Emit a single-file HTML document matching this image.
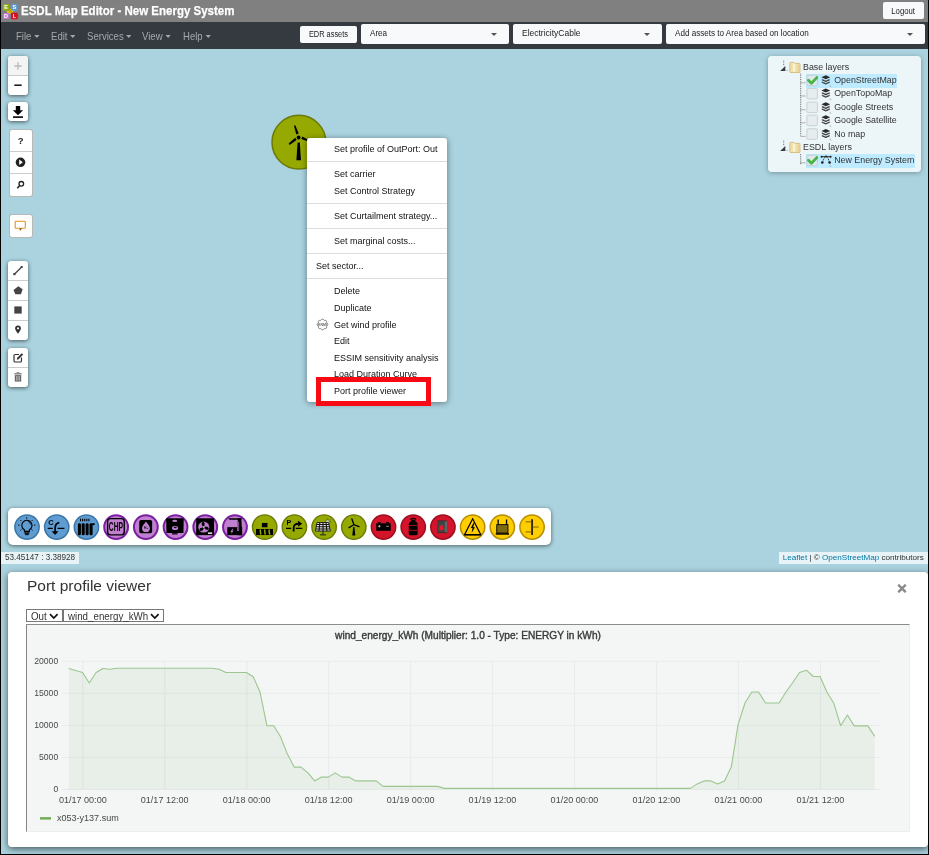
<!DOCTYPE html>
<html lang="en">
<head>
<meta charset="utf-8">
<title>ESDL Map Editor - New Energy System</title>
<style>
*{box-sizing:border-box;margin:0;padding:0}
html,body{width:929px;height:855px;overflow:hidden;background:#aad3df;font-family:"Liberation Sans",sans-serif}
#root{will-change:transform;position:absolute;left:0;top:0;width:929px;height:855px;overflow:hidden;background:#aad3df}
.abs{position:absolute}
#hdr{left:0;top:0;width:929px;height:22px;background:#808080}
#title{left:20.700px;top:3.300px;color:#fff;font-weight:bold;font-size:13.600px;line-height:16px;white-space:nowrap;transform:scaleX(.847);transform-origin:0 50%;-webkit-text-stroke:.25px #fff}
#logout{left:883px;top:2px;width:41px;height:17px;background:#f8f9fa;border-radius:2px;font-size:8.6px;line-height:18.200px;text-align:center;color:#222}#logout span,.edr span{display:inline-block;transform:scaleX(.9)}
#nav{left:0;top:22px;width:929px;height:26.600px;background:#343a40}
.mi{top:30px;color:#a5a8ab;font-size:11px;line-height:13px;white-space:nowrap;transform:scaleX(.87);transform-origin:0 50%}
.mi i{display:inline-block;width:0;height:0;border-left:3px solid transparent;border-right:3px solid transparent;border-top:3px solid #a5a8ab;margin-left:3px;vertical-align:2px}
.btn{background:#f8f9fa;border-radius:2px;color:#222;font-size:8.5px;white-space:nowrap}
.sel i{position:absolute;right:12.5px;top:9px;width:0;height:0;border-left:3.5px solid transparent;border-right:3.5px solid transparent;border-top:3.5px solid #555}
.sel span{position:absolute;left:9px;top:3px;line-height:12px;font-size:8.8px;transform:scaleX(.92);transform-origin:0 50%}
#bl{left:0;top:0;width:1px;height:855px;background:#000}
#br{left:928px;top:0;width:1px;height:855px;background:#000}
#bb{left:0;top:854px;width:929px;height:1px;background:#000}

.bar{background:#fff;border-radius:3px;box-shadow:0 1px 4px rgba(0,0,0,.6)}
.bar .b{position:absolute;left:0;width:100%;border-top:1px solid #ccc}
.bar2{background:#fff;border-radius:3px;border:1px solid rgba(0,0,0,.28)}
.ic{position:absolute}
#ctx{left:307px;top:138px;width:140px;height:264px;background:#fff;border-radius:3px;box-shadow:0 1px 6px rgba(0,0,0,.45)}
#ctx div.t{position:absolute;left:27px;font-size:9px;line-height:12px;color:#111;white-space:nowrap}
#ctx div.s{position:absolute;left:0;width:140px;height:1px;background:#ddd}
#red{left:316px;top:377.3px;width:115.2px;height:28.5px;border:5px solid #f80a14}
#assets{left:8px;top:508px;width:543px;height:36.600px;background:#fff;border-radius:5px;box-shadow:0 1px 4px rgba(0,0,0,.55)}
#coord{left:1px;top:551.700px;width:78px;height:12.600px;background:rgba(255,255,255,.72);font-size:8.140px;line-height:12.600px;color:#333;padding-left:4px;white-space:nowrap}
#attr{left:778.600px;top:551.800px;width:150px;height:12.500px;background:rgba(255,255,255,.72);font-size:8.120px;line-height:12.500px;color:#333;padding-left:4.200px;white-space:nowrap}
#attr b{font-weight:normal;color:#0078a8}
#layers{left:768px;top:56px;width:153px;height:116px;background:rgba(255,255,255,.78);border-radius:4px;box-shadow:0 1px 5px rgba(0,0,0,.3)}
#layers .r{position:absolute;font-size:8.85px;line-height:13px;color:#333;white-space:nowrap}
#layers .hl{position:absolute;background:#beebff;height:13.8px}

#dlg{left:8px;top:572px;width:920px;height:275px;background:#fff;border-radius:4px;box-shadow:0 2px 7px rgba(0,0,0,.6)}
#dtitle{left:27px;top:576px;font-size:15.5px;line-height:20px;color:#333;white-space:nowrap}
#dclose{left:894px;top:580.700px;width:16px;font-size:17px;line-height:16px;font-weight:bold;color:#8a8a8a;text-align:center;-webkit-text-stroke:.5px #8a8a8a}
.dsel{height:13px;border:1px solid #777;background:#fff;font-size:10.6px;color:#333;white-space:nowrap}
.dsel span{position:absolute;left:3.5px;top:.8px;line-height:11px;transform:scaleX(.92);transform-origin:0 50%}
#chart{left:26px;top:624px;width:884px;height:208px;background:#f4f6f6;border-left:1px solid #858585;border-top:1px solid #8c8c8c;border-right:1px solid #eee;border-bottom:1px solid #eee}
</style>
</head>
<body>
<div id="root">
<!-- header -->
<div id="hdr" class="abs"></div>
<svg class="abs" style="left:2px;top:3px" width="18" height="18" viewBox="2 3 18 18" font-family="Liberation Sans,sans-serif" font-weight="bold" font-size="5.500" text-anchor="middle"><path d="M7.600 13.200L13.200 9.400" stroke="#f2c200" stroke-width="3.800"/><path d="M9.700 9.300l2 3M8.600 10.200l1.800 2.800" stroke="#8a6d00" stroke-width=".6"/><rect x="2.900" y="4.100" width="6.400" height="6.700" rx="1.300" fill="#8db117"/><rect x="11" y="4.100" width="6.700" height="6.700" rx="1.300" fill="#5b9bd5"/><rect x="2.900" y="12.900" width="6.400" height="6.200" rx="1.300" fill="#c076d0"/><rect x="11" y="12.700" width="6.900" height="6.500" rx="1.300" fill="#d9101f"/><text x="6.100" y="9.400" fill="#fff">E</text><text x="14.400" y="9.400" fill="#fff">S</text><text x="6.100" y="18" fill="#fff">D</text><text x="14.500" y="18" fill="#fff">L</text></svg>
<div id="title" class="abs">ESDL Map Editor - New Energy System</div>
<div id="logout" class="abs"><span>Logout</span></div>
<div id="nav" class="abs"></div>
<div class="abs mi" style="left:16px">File<i></i></div>
<div class="abs mi" style="left:51px">Edit<i></i></div>
<div class="abs mi" style="left:87px">Services<i></i></div>
<div class="abs mi" style="left:142px">View<i></i></div>
<div class="abs mi" style="left:183px">Help<i></i></div>
<div class="abs btn edr" style="left:300px;top:26px;width:57px;height:17px;line-height:17px;text-align:center"><span style="transform:scaleX(.87)">EDR assets</span></div>
<div class="abs btn sel" style="left:361px;top:24px;width:148px;height:20px"><span>Area</span><i></i></div>
<div class="abs btn sel" style="left:513px;top:24px;width:149px;height:20px"><span style="transform:scaleX(.965)">ElectricityCable</span><i></i></div>
<div class="abs btn sel" style="left:666px;top:24px;width:259px;height:20px"><span>Add assets to Area based on location</span><i></i></div>

<!-- map controls -->
<div class="abs bar" style="left:8.400px;top:56px;width:19.700px;height:39px"><div style="position:absolute;left:0;top:0;width:20px;height:19px;background:#f4f4f4;border-radius:3px 3px 0 0"></div><div class="b" style="top:19px"></div>
<svg class="ic" style="left:0;top:0" width="20" height="39"><path d="M6.3 10h7.4M10 6.3v7.4" stroke="#bbb" stroke-width="1.3" fill="none"/><path d="M6.3 29.2h7.4" stroke="#111" stroke-width="1.5"/></svg></div>
<div class="abs bar" style="left:8.400px;top:102px;width:19.700px;height:19px"><svg class="ic" style="left:0;top:0" width="20" height="19"><path d="M7.8 4h4.4v4.2h2.9L10 13.2 4.9 8.200h2.9z" fill="#000"/><path d="M5 15.1h10" stroke="#000" stroke-width="1.6"/></svg></div>
<div class="abs bar2" style="left:8.600px;top:129px;width:24px;height:68.400px"><div style="position:absolute;left:0;top:20.700px;width:22px;height:1px;background:#ccc"></div><div style="position:absolute;left:0;top:43.200px;width:22px;height:1px;background:#ccc"></div>
<div style="position:absolute;left:0;top:5px;width:22px;text-align:center;font-size:9.5px;font-weight:bold;line-height:12px;color:#222">?</div>
<svg class="ic" style="left:.5px;top:21.400px" width="21" height="46"><circle cx="10.5" cy="11.3" r="4.800" fill="#222"/><path d="M9.2 8.6l3.6 2.700-3.600 2.700z" fill="#fff"/><circle cx="11.3" cy="32.800" r="2.300" fill="none" stroke="#222" stroke-width="1.3"/><path d="M9.7 34.600L7.300 37.200" stroke="#222" stroke-width="1.5"/></svg></div>
<div class="abs bar2" style="left:8.600px;top:214px;width:24px;height:24px"><svg class="ic" style="left:.4px;top:0" width="21" height="22"><path d="M6 6.300h8.500a.8.800 0 0 1 .8.800v5.400a.8.800 0 0 1-.8.800H11.700l-1.500 1.700-.3-1.700H6a.8.800 0 0 1-.8-.8V7.100a.8.800 0 0 1 .8-.8z" fill="#fff" stroke="#e8921a" stroke-width="1.100"/><path d="M9.600 13.500l.5 1.600 1.500-1.600z" fill="#333"/></svg></div>
<div class="abs bar" style="left:8.400px;top:261px;width:19.700px;height:79px"><div class="b" style="top:19px"></div><div class="b" style="top:39px"></div><div class="b" style="top:59px"></div>
<svg class="ic" style="left:0;top:0" width="20" height="79"><path d="M6.300 13.200L13.700 6" stroke="#444" stroke-width="1.300"/><rect x="5.300" y="12" width="2.200" height="2.200" fill="#444"/><rect x="12.700" y="5" width="2" height="2" fill="#444"/><path d="M10.300 25.200l4.300 3.100-1.600 5H7.400l-1.900-4.400z" fill="#444"/><rect x="6.300" y="45.400" width="7.400" height="7.200" fill="#444"/><path d="M10 64.400a2.900 2.900 0 0 1 2.900 2.900c0 2-2.900 5.500-2.900 5.500s-2.900-3.500-2.900-5.500A2.900 2.900 0 0 1 10 64.400z" fill="#333"/><circle cx="10" cy="67.300" r="1.100" fill="#fff"/></svg></div>
<div class="abs bar" style="left:8.400px;top:348px;width:19.700px;height:39px"><div class="b" style="top:19px"></div>
<svg class="ic" style="left:0;top:0" width="20" height="39"><path d="M11 6.500H7.300a1.300 1.300 0 0 0-1.300 1.300v4.900a1.300 1.300 0 0 0 1.300 1.300h4.900a1.300 1.300 0 0 0 1.300-1.300V9.500" fill="none" stroke="#333" stroke-width="1.200"/><path d="M8.800 11.700l.4-1.900 4.600-4.600 1.400 1.400-4.600 4.600z" fill="#333"/><g fill="#666"><rect x="6.300" y="25.300" width="7.400" height="1.100"/><rect x="8.700" y="24.300" width="2.600" height="1"/><path d="M6.800 27.100h6.400v6.500H6.800z"/></g><path d="M8.600 28v4.700M10 28v4.700M11.400 28v4.700" stroke="#ddd" stroke-width=".6"/></svg></div>
<svg class="abs" style="left:268px;top:111px" width="62" height="62" viewBox="268 111 62 62"><circle cx="298.900" cy="142.200" r="26.900" fill="#95a901" stroke="#6b7a04" stroke-width="1.500"/><circle cx="298.600" cy="137.500" r="1.900" fill="#000"/><path d="M297.600 142.600h2.200l1.200 17.600h-4.600z" fill="#000"/><path d="M296.300 134.400l2.400-.9-3.400-8.200-1.300.5z" fill="#000"/><path d="M295.200 137.800l1.400 2.200-7 4.900-.9-1.300z" fill="#000"/><path d="M302.300 136.600l-.9 2.400 8 3.100.5-1.400z" fill="#000"/></svg>
<div id="ctx" class="abs">
<div class="t" style="left:27px;top:5.1px">Set profile of OutPort: Out</div>
<div class="t" style="left:27px;top:30.3px">Set carrier</div>
<div class="t" style="left:27px;top:46.9px">Set Control Strategy</div>
<div class="t" style="left:27px;top:71.8px">Set Curtailment strategy...</div>
<div class="t" style="left:27px;top:97.0px">Set marginal costs...</div>
<div class="t" style="left:9px;top:122.2px">Set sector...</div>
<div class="t" style="left:27px;top:147.2px">Delete</div>
<div class="t" style="left:27px;top:163.8px">Duplicate</div>
<div class="t" style="left:27px;top:180.6px">Get wind profile</div>
<div class="t" style="left:27px;top:197.4px">Edit</div>
<div class="t" style="left:27px;top:214.0px">ESSIM sensitivity analysis</div>
<div class="t" style="left:27px;top:230.1px">Load Duration Curve</div>
<div class="t" style="left:27px;top:247.3px">Port profile viewer</div>
<div class="s" style="top:23.3px"></div>
<div class="s" style="top:65.1px"></div>
<div class="s" style="top:90.0px"></div>
<div class="s" style="top:115.2px"></div>
<div class="s" style="top:140.2px"></div>
<svg style="position:absolute;left:7.600px;top:179.400px" width="15" height="15"><path d="M7.50 2.20 L8.48 2.60 L9.22 3.34 L10.28 3.34 L11.25 3.75 L11.66 4.72 L11.66 5.78 L12.40 6.52 L12.80 7.50 L12.40 8.48 L11.66 9.22 L11.66 10.28 L11.25 11.25 L10.28 11.66 L9.22 11.66 L8.48 12.40 L7.50 12.80 L6.52 12.40 L5.78 11.66 L4.72 11.66 L3.75 11.25 L3.34 10.28 L3.34 9.22 L2.60 8.48 L2.20 7.50 L2.60 6.52 L3.34 5.78 L3.34 4.72 L3.75 3.75 L4.72 3.34 L5.78 3.34 L6.52 2.60Z" fill="none" stroke="#707070" stroke-width=".9" stroke-linejoin="round"/><text x="7.500" y="8.700" font-size="3.500" font-weight="bold" font-family="Liberation Sans,sans-serif" text-anchor="middle" fill="#666">KNMI</text></svg>
</div>
<div id="red" class="abs"></div>
<!--ASSETS_START--><div id="assets" class="abs"></div>
<svg class="abs" style="left:8px;top:508px" width="543" height="37" viewBox="8 508 543 37">
<g transform="translate(27 527.050)"><circle r="12.15" fill="#5e9cd1" stroke="#3b76a6" stroke-width="1.5"/><path d="M-2.600 4.300v-1.500a5.100 5.100 0 1 1 5 0v1.500z" fill="none" stroke="#000" stroke-width="1.100"/><path d="M-2.700 5h5.200M-2.500 6.300h4.800M-1.900 7.600h3.600" stroke="#000" stroke-width="1"/><path d="M-.3-8.300v-1.500M-5.600-6l-1.100-1.100M4.600-6l1.100-1.100M-7.500-1.900h-1.500M6.900-1.900h1.500M-5.500 2.400l-1.100 1M4.500 2.400l1.100 1" stroke="#000" stroke-width=".9"/><path d="M.9-5.600a3.400 3.400 0 0 1 2.700 3.200" fill="none" stroke="#000" stroke-width=".7"/></g>
<g transform="translate(56.71 527.050)"><circle r="12.15" fill="#5e9cd1" stroke="#3b76a6" stroke-width="1.5"/><text x="-5.900" y="-2.200" font-family="Liberation Sans,sans-serif" font-weight="bold" font-size="7.400" text-anchor="middle" fill="#000">C</text><path d="M-9 1.400h5.100M.8 1.400h6.900" stroke="#000" stroke-width="1.200"/><path d="M2.600-4.500C-.6-4.100-1.600-2-1.600 1.400v3.200" fill="none" stroke="#000" stroke-width="1.700"/><path d="M-5.100 4.300h6.900l-3.400 3.700z" fill="#000"/></g>
<g transform="translate(86.42 527.050)"><circle r="12.15" fill="#5e9cd1" stroke="#3b76a6" stroke-width="1.5"/><g fill="#000"><rect x="-8.500" y="-3.800" width="3" height="12" rx="1.300"/><rect x="-4.700" y="-3.800" width="3" height="12" rx="1.300"/><rect x="-.8" y="-3.800" width="3" height="12" rx="1.300"/><rect x="3.100" y="-3.800" width="3.100" height="12" rx="1.300"/><path d="M5.600-3.800h2.700v1.400l-2.100.9z"/></g><path d="M-5.900-8.400v2.700M-3.800-8.400v2.700M-1.700-8.400v2.700M.4-8.400v2.700M2.500-8.400v2.700" stroke="#000" stroke-width="1.100"/></g>
<g transform="translate(116.13 527.050)"><circle r="11.9" fill="#c080cf" stroke="#7a1fa0" stroke-width="2"/><rect x="-8.500" y="-8.400" width="16.600" height="16.200" rx="2.800" fill="none" stroke="#000" stroke-width="1.400"/><text x="-.4" y="3.700" font-family="Liberation Sans,sans-serif" font-weight="bold" font-size="12" text-anchor="middle" fill="#000" transform="scale(.56 1)">CHP</text></g>
<g transform="translate(145.84 527.050)"><circle r="11.9" fill="#c080cf" stroke="#7a1fa0" stroke-width="2"/><rect x="-6.600" y="-7.100" width="12.900" height="13.400" rx="1.800" fill="#000"/><path d="M.1-5.600c2 2.700 3.900 4.700 3.900 6.700a3.900 3.900 0 0 1-7.800 0c0-2 1.900-4 3.900-6.700z" fill="#c080cf"/><text x=".1" y="2.300" font-family="Liberation Sans,sans-serif" font-weight="bold" font-size="3.400" text-anchor="middle" fill="#000">H₂</text></g>
<g transform="translate(175.55 527.050)"><circle r="11.9" fill="#c080cf" stroke="#7a1fa0" stroke-width="2"/><path d="M-9.400-8.800h17.600l-.3 14.800h-17z" fill="#000"/><rect x="-3.600" y="6" width="5.600" height="1.500" fill="#2a0a33"/><ellipse cx="-.8" cy="-6.100" rx="2.500" ry="1.100" fill="#c080cf"/><ellipse cx="-.5" cy="1" rx="3.100" ry="2" fill="#c080cf"/><ellipse cx="-.3" cy=".5" rx="1.500" ry=".8" fill="#000"/></g>
<g transform="translate(205.26 527.050)"><circle r="11.9" fill="#c080cf" stroke="#7a1fa0" stroke-width="2"/><rect x="-9.100" y="-8.800" width="17.900" height="16.900" fill="#000"/><circle cx="-1.500" cy=".1" r="5.700" fill="#c080cf"/><circle cx="-1.500" cy=".1" r="5.700" fill="none" stroke="#000" stroke-width=".5"/><g transform="translate(-1.500 .1)" fill="#000"><path d="M0 0C-2.200-1-2.900-3.400-1.300-5.100C.6-5.400 1.800-3.600 0 0z"/><path d="M0 0C-2.200-1-2.900-3.400-1.300-5.100C.6-5.400 1.800-3.600 0 0z" transform="rotate(120)"/><path d="M0 0C-2.200-1-2.900-3.400-1.300-5.100C.6-5.400 1.800-3.600 0 0z" transform="rotate(240)"/></g><rect x="-2.200" y="-.7" width="1.400" height="1.500" fill="#ddd"/><rect x="2.700" y="5.300" width="4.200" height="1.600" fill="#e6dce8"/></g>
<g transform="translate(234.97 527.050)"><circle r="11.9" fill="#c080cf" stroke="#7a1fa0" stroke-width="2"/><path d="M-6.700-8.800H6.400v1.500H-5.500z" fill="#000"/><path d="M2.800-8.800h3.600l.8 16.900H2.800z" fill="#000"/><rect x="-7.700" y=".1" width="14.900" height="8" fill="#000"/><path d="M2.500.1v3.600h1.200v-9" fill="none" stroke="#c080cf" stroke-width=".7"/><path d="M-2.300 1.800l-2.400 3h1.500l-1 2.400 2.900-3.400h-1.500l1.300-2z" fill="#c080cf"/></g>
<g transform="translate(264.68 527.050)"><circle r="12.2" fill="#95a900" stroke="#6c7a08" stroke-width="1.4"/><rect x="-2.800" y="-4.100" width="5.600" height="4.300" fill="#000"/><rect x="-8.700" y="1.900" width="17" height="6.100" fill="#000"/><path d="M-4.800 2.600c1.300 1.300-.2 3 1.200 4.800M-.4 2.600c1.300 1.300-.2 3 1.200 4.800M4 2.600c1.300 1.300-.2 3 1.200 4.800" fill="none" stroke="#95a900" stroke-width="1.500"/></g>
<g transform="translate(294.39 527.050)"><circle r="12.2" fill="#95a900" stroke="#6c7a08" stroke-width="1.4"/><text x="-5.500" y="-2.100" font-family="Liberation Sans,sans-serif" font-weight="bold" font-size="7.200" text-anchor="middle" fill="#000">P</text><path d="M-8.400 1.300h5.200M1.400 1.300h6.500" stroke="#000" stroke-width="1.200"/><path d="M-.7 4.500v-3.600c0-2.800 1.500-4.200 4.700-4.200" fill="none" stroke="#000" stroke-width="1.800"/><path d="M3.700-6.200l4.100 2.900-4.100 2.900z" fill="#000"/></g>
<g transform="translate(324.1 527.050)"><circle r="12.2" fill="#95a900" stroke="#6c7a08" stroke-width="1.4"/><g transform="translate(-1.100 -.3)"><circle cx="4.600" cy="-5" r="2" fill="#c9cfa0" stroke="#333" stroke-width=".5"/><path d="M4.600-8.300v1M7.400-7.400l-.7.700M8-5h-1" stroke="#333" stroke-width=".5"/><path d="M-6-4.200H5.600L7.400 4.300H-7.600z" fill="#e9e9e9" stroke="#222" stroke-width="1"/><path d="M-6.800 0H6.500M-7.200 2.200H7M-6.400-2.200H6M-3.200-4.200l-.8 8.500M0-4.200v8.500M3-4.200l.9 8.500" stroke="#111" stroke-width="1.100"/><path d="M0 4.300v3.500M-3 8.100h6" stroke="#222" stroke-width="1"/></g></g>
<g transform="translate(353.81 527.050)"><circle r="12.2" fill="#95a900" stroke="#6c7a08" stroke-width="1.4"/><circle cx="0" cy="-2.300" r="1" fill="#000"/><path d="M-.6 0h1.200l.9 8.500h-3z" fill="#000"/><path d="M-.3-3.600L-2-8.200" stroke="#000" stroke-width="1.300" stroke-linecap="round"/><path d="M-1.200-1.600L-4.800.6M1.200-2l4 1.600" stroke="#000" stroke-width="1.300" stroke-linecap="round"/></g>
<g transform="translate(383.52 527.050)"><circle r="12.15" fill="#d3142b" stroke="#9c0f20" stroke-width="1.5"/><rect x="-7.300" y="-3.700" width="14.500" height="7.400" fill="#000"/><rect x="-5.700" y="-4.900" width="2.900" height="1.400" fill="#000"/><rect x="2.700" y="-4.900" width="2.900" height="1.400" fill="#000"/><path d="M-5.400-.8h2.400M-4.200-2v2.400M2.800-.8h2.400" stroke="#f3c6cb" stroke-width=".8"/></g>
<g transform="translate(413.23 527.050)"><circle r="12.15" fill="#d3142b" stroke="#9c0f20" stroke-width="1.5"/><path d="M-1.900-7.400h3.800v1.600c1.500.5 2.500 1.600 2.500 3.300v9.300a1.500 1.500 0 0 1-1.500 1.500h-5.800a1.500 1.500 0 0 1-1.500-1.500v-9.300c0-1.700 1-2.800 2.500-3.300z" fill="#000"/><rect x="-2.400" y="-8.700" width="4.800" height="1.900" rx=".7" fill="none" stroke="#000" stroke-width="1"/><path d="M-4.400-1.600h8.800M-4.400 3.300h8.800" stroke="#d3142b" stroke-width=".8"/></g>
<g transform="translate(442.94 527.050)"><circle r="12.15" fill="#d3142b" stroke="#9c0f20" stroke-width="1.5"/><g transform="translate(-.9 -.2)"><rect x="-4.900" y="-5.900" width="9.800" height="11.600" rx="1" fill="#434343"/><rect x="2.800" y="-5.900" width="2.100" height="11.600" rx=".8" fill="#666"/><path d="M-4.900-6h9.800M-4.900 5.800h9.800" stroke="#2e2e2e" stroke-width=".8"/><path d="M-.6-2.700c1.200 1.600 2.300 2.800 2.300 4a2.300 2.300 0 0 1-4.600 0c0-1.200 1.100-2.400 2.300-4z" fill="#e01b2f"/></g></g>
<g transform="translate(472.65 527.050)"><circle r="12.15" fill="#ffce00" stroke="#b58e02" stroke-width="1.5"/><path d="M0-8.200L8.100 7.600H-8.100z" fill="none" stroke="#000" stroke-width="1.200" stroke-linejoin="miter"/><path d="M-8.300 7.900h16.600" stroke="#000" stroke-width="1.100"/><path d="M1.100-4.600L-1.900.9h1.800L-1.100 6 2.300.1H.5L2-4.600z" fill="#000"/></g>
<g transform="translate(502.36 527.050)"><circle r="12.15" fill="#ffce00" stroke="#b58e02" stroke-width="1.5"/><rect x="-5.600" y="-2.400" width="11.200" height="8.400" fill="#7a6a10" stroke="#000" stroke-width=".9"/><path d="M-4.200-2.400v-5.200M4.200-2.400v-5.200" stroke="#000" stroke-width="1.300"/><path d="M-6.600 6.900h13.200" stroke="#000" stroke-width="1.500"/></g>
<g transform="translate(532.07 527.050)"><circle r="12.15" fill="#ffce00" stroke="#b58e02" stroke-width="1.5"/><path d="M0-7.900v15.800" stroke="#000" stroke-width="1.500"/><path d="M-6.400-5.200H0M0 0h6.600M-6.400 4.900H0" stroke="#5a4a00" stroke-width=".8"/></g>
</svg><!--ASSETS_END-->
<div id="coord" class="abs">53.45147 : 3.38928</div>
<div id="attr" class="abs"><b>Leaflet</b> | &copy; <b>OpenStreetMap</b> contributors</div>
<div id="layers" class="abs">
<div class="hl" style="left:37.5px;top:17.9px;width:91.0px"></div>
<div class="hl" style="left:37.5px;top:97.9px;width:109.0px"></div>
<div class="r" style="left:35.0px;top:4.8px">Base layers</div>
<div class="r" style="left:66.2px;top:17.9px">OpenStreetMap</div>
<div class="r" style="left:66.2px;top:31.1px">OpenTopoMap</div>
<div class="r" style="left:66.2px;top:44.8px">Google Streets</div>
<div class="r" style="left:66.2px;top:57.9px">Google Satellite</div>
<div class="r" style="left:66.2px;top:71.5px">No map</div>
<div class="r" style="left:35.0px;top:84.8px">ESDL layers</div>
<div class="r" style="left:66.2px;top:97.9px">New Energy System</div>
<svg style="position:absolute;left:0;top:0" width="153" height="116">
<path d="M15.7 4.5v5.500" stroke="#666" stroke-width=".9" stroke-dasharray=".9 .9"/>
<path d="M17.3 14.9v-4.900l-5.100 4.900z" fill="#3a3a3a"/>
<rect x="18.5" y="14.0" width="1" height=".8" fill="#777"/>
<path d="M22.5 6.4h3.400l.9 1h4.500a.7.700 0 0 1 .7.700v7.700a.7.700 0 0 1-.7.700h-8.800a.7.700 0 0 1-.7-.7v-8.700a.7.700 0 0 1 .7-.7z" fill="#f1e0ab" stroke="#cfb272" stroke-width=".8"/>
<path d="M26.0 7.6v8" stroke="#fffbe8" stroke-width="1.500"/>
<path d="M30.2 8.6v7" stroke="#e2ca8c" stroke-width="1"/>
<path d="M15.7 84.5v5.500" stroke="#666" stroke-width=".9" stroke-dasharray=".9 .9"/>
<path d="M17.3 94.9v-4.900l-5.100 4.900z" fill="#3a3a3a"/>
<rect x="18.5" y="94.0" width="1" height=".8" fill="#777"/>
<path d="M22.5 86.4h3.400l.9 1h4.500a.7.700 0 0 1 .7.700v7.700a.7.700 0 0 1-.7.700h-8.800a.7.700 0 0 1-.7-.7v-8.700a.7.700 0 0 1 .7-.7z" fill="#f1e0ab" stroke="#cfb272" stroke-width=".8"/>
<path d="M26.0 87.6v8" stroke="#fffbe8" stroke-width="1.500"/>
<path d="M30.2 88.6v7" stroke="#e2ca8c" stroke-width="1"/>
<path d="M32.7 17.6V79.5" stroke="#555" stroke-width=".9" stroke-dasharray=".9 .9"/>
<path d="M32.7 98.1V109.0" stroke="#555" stroke-width=".9" stroke-dasharray=".9 .9"/>
<path d="M32.7 26.8h4.500" stroke="#666" stroke-width=".9" stroke-dasharray=".9 .9"/>
<rect x="38.9" y="19.2" width="10.500" height="10.500" rx="1" fill="#dfe9ea" stroke="#b4c4c6" stroke-width=".7"/>
<path d="M40.4 24.2l3 3 5.400-5.600" fill="none" stroke="#48b346" stroke-width="2.800" stroke-linecap="round" stroke-linejoin="round"/>
<g transform="translate(53.4 19.3)" fill="#2b2b2b"><path d="M4.400 0l4.400 2-4.400 2L0 2z"/><path d="M4.400 5.700L1.100 4.200 0 4.700l4.400 2 4.400-2-1.100-.5z"/><path d="M4.400 8.200L1.100 6.700 0 7.200l4.400 2 4.400-2-1.100-.5z"/><path d="M.5 3.400l3.900 1.700 3.900-1.700v.9l-3.900 1.700-3.900-1.700zM.5 5.900l3.900 1.700 3.900-1.700v.9l-3.900 1.700-3.900-1.700z" opacity=".55"/></g>
<path d="M62.0 28.8v1.600h1.400" fill="none" stroke="#999" stroke-width=".5"/>
<path d="M32.7 40.0h4.500" stroke="#666" stroke-width=".9" stroke-dasharray=".9 .9"/>
<rect x="38.9" y="32.4" width="10.500" height="10.500" rx="1" fill="#e7ecee" stroke="#c3c9cb" stroke-width=".8"/>
<g transform="translate(53.4 32.5)" fill="#2b2b2b"><path d="M4.400 0l4.400 2-4.400 2L0 2z"/><path d="M4.400 5.700L1.100 4.200 0 4.700l4.400 2 4.400-2-1.100-.5z"/><path d="M4.400 8.200L1.100 6.700 0 7.200l4.400 2 4.400-2-1.100-.5z"/><path d="M.5 3.400l3.900 1.700 3.900-1.700v.9l-3.900 1.700-3.900-1.700zM.5 5.900l3.900 1.700 3.900-1.700v.9l-3.900 1.700-3.900-1.700z" opacity=".55"/></g>
<path d="M62.0 42.0v1.600h1.400" fill="none" stroke="#999" stroke-width=".5"/>
<path d="M32.7 53.7h4.500" stroke="#666" stroke-width=".9" stroke-dasharray=".9 .9"/>
<rect x="38.9" y="46.1" width="10.500" height="10.500" rx="1" fill="#e7ecee" stroke="#c3c9cb" stroke-width=".8"/>
<g transform="translate(53.4 46.2)" fill="#2b2b2b"><path d="M4.400 0l4.400 2-4.400 2L0 2z"/><path d="M4.400 5.700L1.100 4.200 0 4.700l4.400 2 4.400-2-1.100-.5z"/><path d="M4.400 8.200L1.100 6.700 0 7.200l4.400 2 4.400-2-1.100-.5z"/><path d="M.5 3.400l3.900 1.700 3.900-1.700v.9l-3.900 1.700-3.900-1.700zM.5 5.900l3.900 1.700 3.900-1.700v.9l-3.900 1.700-3.900-1.700z" opacity=".55"/></g>
<path d="M62.0 55.7v1.600h1.400" fill="none" stroke="#999" stroke-width=".5"/>
<path d="M32.7 66.8h4.500" stroke="#666" stroke-width=".9" stroke-dasharray=".9 .9"/>
<rect x="38.9" y="59.2" width="10.500" height="10.500" rx="1" fill="#e7ecee" stroke="#c3c9cb" stroke-width=".8"/>
<g transform="translate(53.4 59.3)" fill="#2b2b2b"><path d="M4.400 0l4.400 2-4.400 2L0 2z"/><path d="M4.400 5.700L1.100 4.200 0 4.700l4.400 2 4.400-2-1.100-.5z"/><path d="M4.400 8.200L1.100 6.700 0 7.200l4.400 2 4.400-2-1.100-.5z"/><path d="M.5 3.400l3.900 1.700 3.900-1.700v.9l-3.900 1.700-3.900-1.700zM.5 5.900l3.900 1.700 3.900-1.700v.9l-3.900 1.700-3.900-1.700z" opacity=".55"/></g>
<path d="M62.0 68.8v1.600h1.400" fill="none" stroke="#999" stroke-width=".5"/>
<path d="M32.7 80.4h4.500" stroke="#666" stroke-width=".9" stroke-dasharray=".9 .9"/>
<rect x="38.9" y="72.8" width="10.500" height="10.500" rx="1" fill="#e7ecee" stroke="#c3c9cb" stroke-width=".8"/>
<g transform="translate(53.4 72.9)" fill="#2b2b2b"><path d="M4.400 0l4.400 2-4.400 2L0 2z"/><path d="M4.400 5.700L1.100 4.200 0 4.700l4.400 2 4.400-2-1.100-.5z"/><path d="M4.400 8.200L1.100 6.700 0 7.200l4.400 2 4.400-2-1.100-.5z"/><path d="M.5 3.400l3.900 1.700 3.900-1.700v.9l-3.900 1.700-3.900-1.700zM.5 5.900l3.900 1.700 3.900-1.700v.9l-3.900 1.700-3.900-1.700z" opacity=".55"/></g>
<path d="M62.0 82.4v1.600h1.400" fill="none" stroke="#999" stroke-width=".5"/>
<path d="M32.7 106.8h4.500" stroke="#666" stroke-width=".9" stroke-dasharray=".9 .9"/>
<rect x="38.9" y="99.2" width="10.500" height="10.500" rx="1" fill="#dfe9ea" stroke="#b4c4c6" stroke-width=".7"/>
<path d="M40.4 104.2l3 3 5.400-5.600" fill="none" stroke="#48b346" stroke-width="2.800" stroke-linecap="round" stroke-linejoin="round"/>
<g fill="#1e1e1e" stroke="#1e1e1e"><circle cx="53.6" cy="100.7" r="1" stroke="none"/><circle cx="58.0" cy="100.5" r="1.100" stroke="none"/><circle cx="62.6" cy="100.7" r="1" stroke="none"/><circle cx="54.3" cy="106.5" r="1.300" stroke="none"/><circle cx="61.6" cy="106.5" r="1.300" stroke="none"/><path d="M53.6 100.7H62.6" fill="none" stroke-width=".9"/><path d="M56.6 101.2L54.3 106.5M59.6 101.2L61.6 106.5" fill="none" stroke-width=".8" stroke-dasharray="1.200 .6"/></g>
<path d="M62.0 108.8v1.600h1.400" fill="none" stroke="#999" stroke-width=".5"/>
</svg>
</div>

<!--DLG_START--><div id="dlg" class="abs"></div>
<div id="dtitle" class="abs">Port profile viewer</div>
<div id="dclose" class="abs">&times;</div>
<div class="abs dsel" style="left:26px;top:609px;width:37px"><span>Out</span><svg width="10" height="7" style="position:absolute;right:3px;top:3px"><path d="M1 1.200l3.800 3.800 3.800-3.800" fill="none" stroke="#111" stroke-width="1.700"/></svg></div>
<div class="abs dsel" style="left:63px;top:609px;width:101px"><span>wind_energy_kWh</span><svg width="10" height="7" style="position:absolute;right:3px;top:3px"><path d="M1 1.200l3.800 3.800 3.800-3.800" fill="none" stroke="#111" stroke-width="1.700"/></svg></div>
<div id="chart" class="abs"></div>
<svg class="abs" style="left:26px;top:623px" width="886" height="209" viewBox="26 623 886 209" font-family="Liberation Sans,sans-serif">
<path d="M62.300 661.2H880" stroke="#e8ebeb" stroke-width="1"/>
<path d="M62.300 693.2H880" stroke="#e8ebeb" stroke-width="1"/>
<path d="M62.300 725.4H880" stroke="#e8ebeb" stroke-width="1"/>
<path d="M62.300 757.4H880" stroke="#e8ebeb" stroke-width="1"/>
<path d="M62.300 789.4H880" stroke="#e8ebeb" stroke-width="1"/>
<path d="M82.8 661.200V790.500" stroke="#e8ebeb" stroke-width="1"/>
<path d="M164.8 661.200V790.500" stroke="#e8ebeb" stroke-width="1"/>
<path d="M246.8 661.200V790.500" stroke="#e8ebeb" stroke-width="1"/>
<path d="M328.7 661.200V790.500" stroke="#e8ebeb" stroke-width="1"/>
<path d="M410.7 661.200V790.500" stroke="#e8ebeb" stroke-width="1"/>
<path d="M492.6 661.200V790.500" stroke="#e8ebeb" stroke-width="1"/>
<path d="M574.6 661.200V790.500" stroke="#e8ebeb" stroke-width="1"/>
<path d="M656.6 661.200V790.500" stroke="#e8ebeb" stroke-width="1"/>
<path d="M738.5 661.200V790.500" stroke="#e8ebeb" stroke-width="1"/>
<path d="M820.5 661.200V790.500" stroke="#e8ebeb" stroke-width="1"/>
<path d="M68.8 668.5 L75.6 670.5 L82.5 672.5 L89.3 683.0 L96.1 672.5 L102.9 668.5 L109.8 669.2 L116.6 668.2 L123.4 668.2 L130.3 668.2 L137.1 668.2 L143.9 668.2 L150.8 668.2 L157.6 668.2 L164.4 668.2 L171.2 668.2 L178.1 668.2 L184.9 668.2 L191.7 668.2 L198.6 668.2 L205.4 668.2 L212.2 668.2 L219.1 669.2 L225.9 672.5 L232.7 672.5 L239.6 672.5 L246.4 672.5 L253.2 676.7 L260.0 692.0 L266.9 725.7 L273.7 725.7 L280.5 736.7 L287.4 754.1 L294.2 767.1 L301.0 767.1 L307.9 772.9 L314.7 780.9 L321.5 777.1 L328.3 777.1 L335.2 772.9 L342.0 777.1 L348.8 777.1 L355.7 780.9 L362.5 780.9 L369.3 780.9 L376.2 780.9 L383.0 786.4 L389.8 786.4 L396.6 786.4 L403.5 786.4 L410.3 786.4 L417.1 786.4 L424.0 786.4 L430.8 786.4 L437.6 786.4 L444.4 788.4 L451.3 788.4 L458.1 788.4 L464.9 788.4 L471.8 788.4 L478.6 788.4 L485.4 788.4 L492.3 788.4 L499.1 788.4 L505.9 788.4 L512.8 788.4 L519.6 788.4 L526.4 788.4 L533.2 788.4 L540.1 788.4 L546.9 788.4 L553.7 788.4 L560.6 788.4 L567.4 788.4 L574.2 788.4 L581.0 788.4 L587.9 788.4 L594.7 788.4 L601.5 788.4 L608.4 788.4 L615.2 788.4 L622.0 788.4 L628.9 788.4 L635.7 788.4 L642.5 788.4 L649.3 788.4 L656.2 788.4 L663.0 788.4 L669.8 788.4 L676.7 788.4 L683.5 788.4 L690.3 788.4 L697.2 783.9 L704.0 780.9 L710.8 780.9 L717.6 783.9 L724.5 780.9 L731.3 767.1 L738.1 724.4 L745.0 703.0 L751.8 692.0 L758.6 692.0 L765.5 703.0 L772.3 703.0 L779.1 703.0 L785.9 692.0 L792.8 682.5 L799.6 672.5 L806.4 670.2 L813.3 676.5 L820.1 676.5 L826.9 692.0 L833.8 703.2 L840.6 725.7 L847.4 715.0 L854.2 725.9 L861.1 725.9 L867.9 725.9 L874.7 736.4 L874.7 789.4 L68.8 789.4 Z" fill="#7eb26d" fill-opacity=".1"/>
<path d="M68.8 668.5 L75.6 670.5 L82.5 672.5 L89.3 683.0 L96.1 672.5 L102.9 668.5 L109.8 669.2 L116.6 668.2 L123.4 668.2 L130.3 668.2 L137.1 668.2 L143.9 668.2 L150.8 668.2 L157.6 668.2 L164.4 668.2 L171.2 668.2 L178.1 668.2 L184.9 668.2 L191.7 668.2 L198.6 668.2 L205.4 668.2 L212.2 668.2 L219.1 669.2 L225.9 672.5 L232.7 672.5 L239.6 672.5 L246.4 672.5 L253.2 676.7 L260.0 692.0 L266.9 725.7 L273.7 725.7 L280.5 736.7 L287.4 754.1 L294.2 767.1 L301.0 767.1 L307.9 772.9 L314.7 780.9 L321.5 777.1 L328.3 777.1 L335.2 772.9 L342.0 777.1 L348.8 777.1 L355.7 780.9 L362.5 780.9 L369.3 780.9 L376.2 780.9 L383.0 786.4 L389.8 786.4 L396.6 786.4 L403.5 786.4 L410.3 786.4 L417.1 786.4 L424.0 786.4 L430.8 786.4 L437.6 786.4 L444.4 788.4 L451.3 788.4 L458.1 788.4 L464.9 788.4 L471.8 788.4 L478.6 788.4 L485.4 788.4 L492.3 788.4 L499.1 788.4 L505.9 788.4 L512.8 788.4 L519.6 788.4 L526.4 788.4 L533.2 788.4 L540.1 788.4 L546.9 788.4 L553.7 788.4 L560.6 788.4 L567.4 788.4 L574.2 788.4 L581.0 788.4 L587.9 788.4 L594.7 788.4 L601.5 788.4 L608.4 788.4 L615.2 788.4 L622.0 788.4 L628.9 788.4 L635.7 788.4 L642.5 788.4 L649.3 788.4 L656.2 788.4 L663.0 788.4 L669.8 788.4 L676.7 788.4 L683.5 788.4 L690.3 788.4 L697.2 783.9 L704.0 780.9 L710.8 780.9 L717.6 783.9 L724.5 780.9 L731.3 767.1 L738.1 724.4 L745.0 703.0 L751.8 692.0 L758.6 692.0 L765.5 703.0 L772.3 703.0 L779.1 703.0 L785.9 692.0 L792.8 682.5 L799.6 672.5 L806.4 670.2 L813.3 676.5 L820.1 676.5 L826.9 692.0 L833.8 703.2 L840.6 725.7 L847.4 715.0 L854.2 725.9 L861.1 725.9 L867.9 725.9 L874.7 736.4" fill="none" stroke="#9cc68e" stroke-width="1.100" stroke-linejoin="round"/>
<text transform="translate(58.200 664.1) scale(.9 1)" font-size="9.600" text-anchor="end" fill="#484848">20000</text>
<text transform="translate(58.200 696.1) scale(.9 1)" font-size="9.600" text-anchor="end" fill="#484848">15000</text>
<text transform="translate(58.200 728.3) scale(.9 1)" font-size="9.600" text-anchor="end" fill="#484848">10000</text>
<text transform="translate(58.200 760.3) scale(.9 1)" font-size="9.600" text-anchor="end" fill="#484848">5000</text>
<text transform="translate(58.200 792.3) scale(.9 1)" font-size="9.600" text-anchor="end" fill="#484848">0</text>
<text transform="translate(82.8 803.200) scale(.943 1)" font-size="9.600" text-anchor="middle" fill="#4a4a4a">01/17 00:00</text>
<text transform="translate(164.7 803.200) scale(.943 1)" font-size="9.600" text-anchor="middle" fill="#4a4a4a">01/17 12:00</text>
<text transform="translate(246.7 803.200) scale(.943 1)" font-size="9.600" text-anchor="middle" fill="#4a4a4a">01/18 00:00</text>
<text transform="translate(328.6 803.200) scale(.943 1)" font-size="9.600" text-anchor="middle" fill="#4a4a4a">01/18 12:00</text>
<text transform="translate(410.6 803.200) scale(.943 1)" font-size="9.600" text-anchor="middle" fill="#4a4a4a">01/19 00:00</text>
<text transform="translate(492.5 803.200) scale(.943 1)" font-size="9.600" text-anchor="middle" fill="#4a4a4a">01/19 12:00</text>
<text transform="translate(574.5 803.200) scale(.943 1)" font-size="9.600" text-anchor="middle" fill="#4a4a4a">01/20 00:00</text>
<text transform="translate(656.5 803.200) scale(.943 1)" font-size="9.600" text-anchor="middle" fill="#4a4a4a">01/20 12:00</text>
<text transform="translate(738.4 803.200) scale(.943 1)" font-size="9.600" text-anchor="middle" fill="#4a4a4a">01/21 00:00</text>
<text transform="translate(820.4 803.200) scale(.943 1)" font-size="9.600" text-anchor="middle" fill="#4a4a4a">01/21 12:00</text>
<text x="468" y="639" font-size="10.150" text-anchor="middle" fill="#3a3a3a" stroke="#3a3a3a" stroke-width=".38">wind_energy_kWh (Multiplier: 1.0 - Type: ENERGY in kWh)</text>
<rect x="40" y="817.100" width="11" height="2.500" fill="#72ad57"/>
<text transform="translate(56.900 821.100) scale(.964 1)" font-size="9.400" fill="#484848">x053-y137.sum</text>
</svg><!--DLG_END-->
<div id="bl" class="abs"></div><div id="br" class="abs"></div><div id="bb" class="abs"></div>
</div>
</body>
</html>
